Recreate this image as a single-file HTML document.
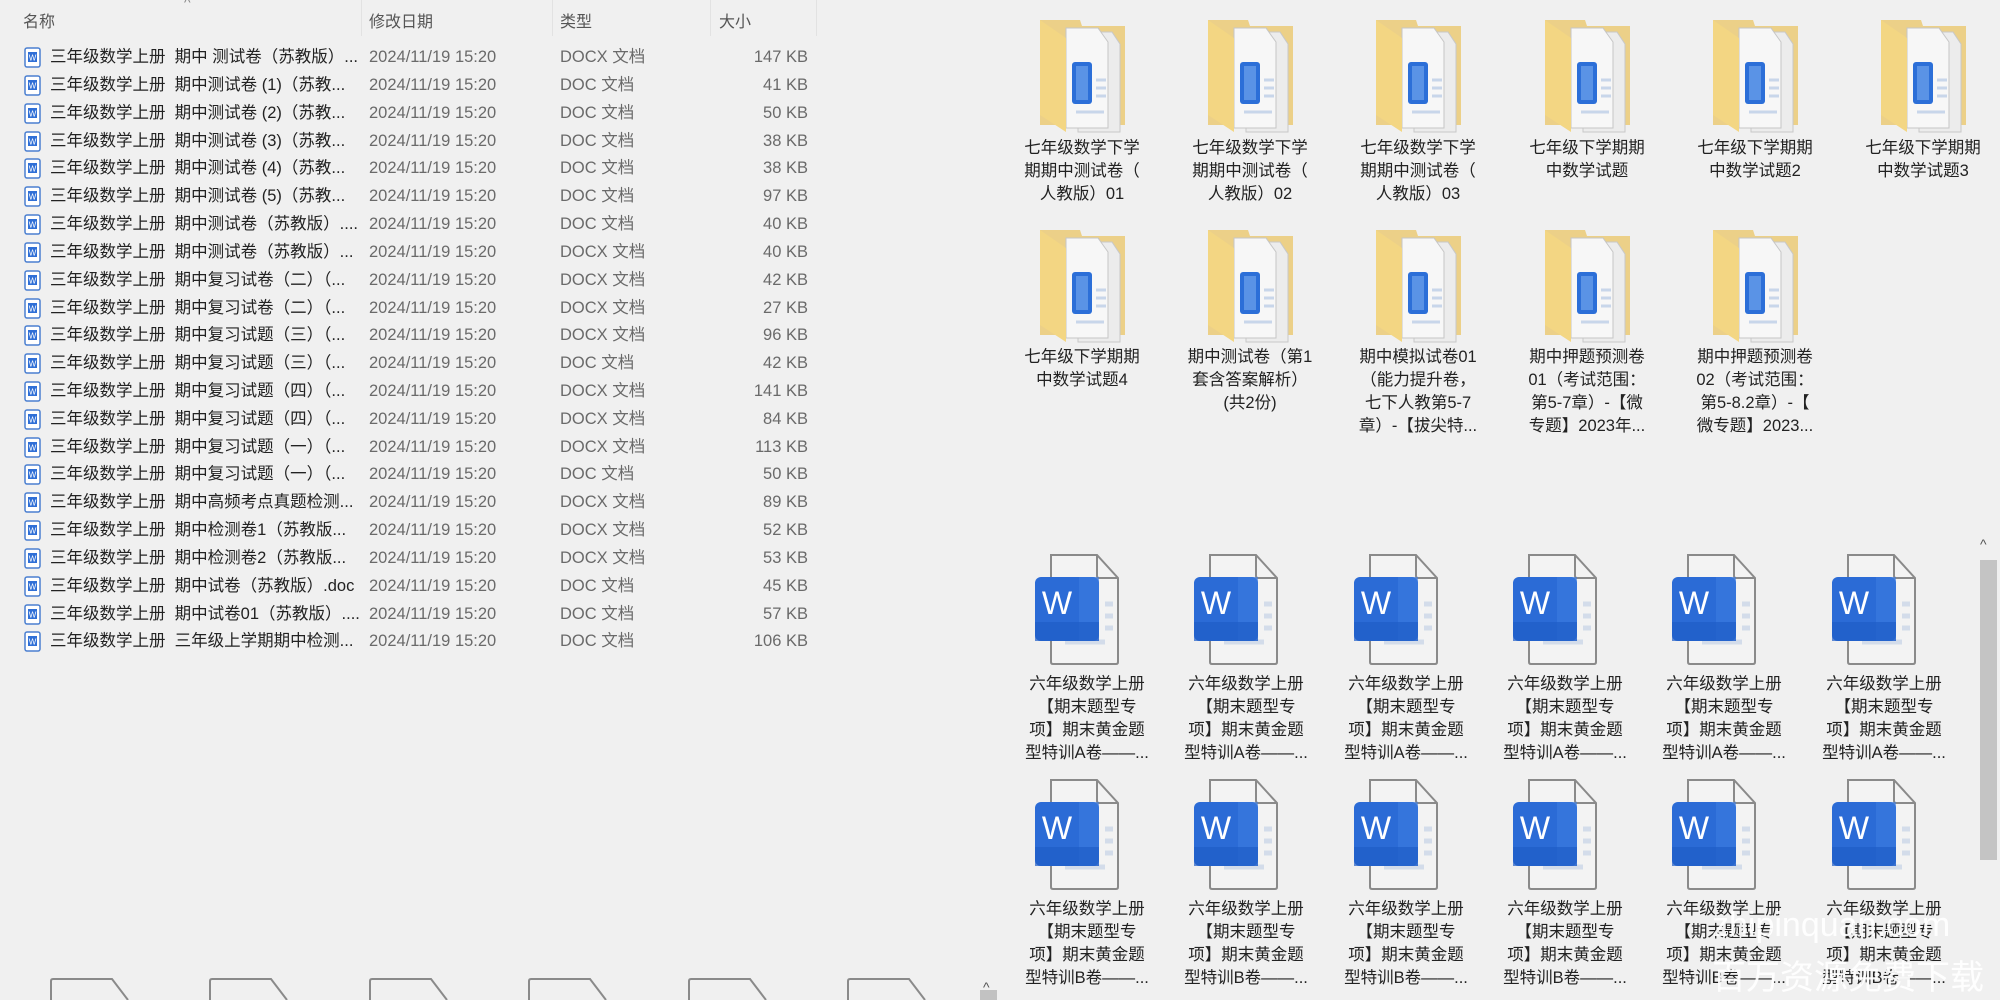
<!DOCTYPE html>
<html><head><meta charset="utf-8"><style>
*{margin:0;padding:0;box-sizing:border-box}
body{width:2000px;height:1000px;background:#f0f0f0;position:relative;overflow:hidden;font-family:"Liberation Sans","Noto Sans CJK SC",sans-serif;}
.a{position:absolute;white-space:nowrap}
.h{top:8px;font-size:16px;color:#555}
.sep{position:absolute;top:0;width:1px;height:36px;background:#e2e2e2}
.r{position:absolute;left:0;width:820px;height:28px;font-size:16.5px;line-height:28px}
.r span{position:absolute}
.n{left:50px;color:#222}
.d{left:369px;color:#6a6a6a}
.t{left:560px;color:#6a6a6a}
.s{right:12px;color:#6a6a6a}
.ic{position:absolute;left:24px;top:4px}
.lab{position:absolute;width:150px;text-align:center;font-size:16.5px;line-height:23px;color:#222}
.wm{position:absolute;color:rgba(255,255,255,0.92);font-size:34px;white-space:nowrap}
</style></head><body>
<svg width="0" height="0" style="position:absolute">
<defs>
<g id="sdoc"><rect x="1" y="1" width="15" height="19" rx="2" fill="#fff" stroke="#4a7fd0" stroke-width="1.5"/><rect x="4" y="5" width="9" height="10" fill="#2f6fd6"/><text x="8.5" y="13.5" font-size="8" fill="#fff" text-anchor="middle" font-family="Liberation Sans">W</text></g>
<g id="fold">
<path d="M0 0 H40 L42 6 H85 V105 H0 Z" fill="#ecd088"/>
<path d="M38 12 H72 L80 24 V112 H38 Z" fill="#ececec" stroke="#c8c8c8"/>
<path d="M26 8 H58 L68 22 V108 H26 Z" fill="#f7f7f7" stroke="#c6c6c6"/>
<rect x="32" y="42" width="20" height="42" rx="3" fill="#2c6fd8"/>
<rect x="36" y="46" width="12" height="34" fill="#5a93e6"/>
<path d="M56 60 h10 M56 68 h10 M56 76 h10 M36 92 h28" stroke="#c8d6ea" stroke-width="3"/>
<path d="M0 0 L26 18 V112 L0 95 Z" fill="#f3d683"/>
</g>
<g id="word">
<path d="M16 1 H62 L83 24 V108 Q83 110 81 110 H18 Q16 110 16 108 Z" fill="#f3f3f3" stroke="#8a8a8a" stroke-width="2"/>
<path d="M62 1 V22 Q62 24 64 24 H83" fill="none" stroke="#8a8a8a" stroke-width="2"/>
<path d="M70 50 h8 M70 62 h8 M70 74 h8 M30 88 h40" stroke="#d3dcea" stroke-width="5"/>
<rect x="0" y="23" width="64" height="64" rx="6" fill="#2b6bd6"/>
<rect x="44" y="23" width="20" height="64" fill="#3c7be0" opacity="0.6"/>
<rect x="0" y="68" width="64" height="19" fill="#1f5cc6" opacity="0.7"/>
<text x="22" y="60" font-size="32" fill="#fff" text-anchor="middle" font-family="Liberation Sans">W</text>
</g>
</defs></svg>

<div class="a" style="left:184px;top:-6px;font-size:14px;color:#888">^</div>
<div class="a h" style="left:23px">名称</div>
<div class="a h" style="left:369px">修改日期</div>
<div class="a h" style="left:560px">类型</div>
<div class="a h" style="left:719px">大小</div>
<div class="sep" style="left:361px"></div><div class="sep" style="left:552px"></div><div class="sep" style="left:710px"></div><div class="sep" style="left:816px"></div>

<div class="r" style="top:43px"><svg class="ic" width="18" height="22"><use href="#sdoc"/></svg><span class="n">三年级数学上册&nbsp; 期中 测试卷（苏教版）...</span><span class="d">2024/11/19 15:20</span><span class="t">DOCX 文档</span><span class="s">147 KB</span></div>
<div class="r" style="top:71px"><svg class="ic" width="18" height="22"><use href="#sdoc"/></svg><span class="n">三年级数学上册&nbsp; 期中测试卷 (1)（苏教...</span><span class="d">2024/11/19 15:20</span><span class="t">DOC 文档</span><span class="s">41 KB</span></div>
<div class="r" style="top:99px"><svg class="ic" width="18" height="22"><use href="#sdoc"/></svg><span class="n">三年级数学上册&nbsp; 期中测试卷 (2)（苏教...</span><span class="d">2024/11/19 15:20</span><span class="t">DOC 文档</span><span class="s">50 KB</span></div>
<div class="r" style="top:127px"><svg class="ic" width="18" height="22"><use href="#sdoc"/></svg><span class="n">三年级数学上册&nbsp; 期中测试卷 (3)（苏教...</span><span class="d">2024/11/19 15:20</span><span class="t">DOC 文档</span><span class="s">38 KB</span></div>
<div class="r" style="top:154px"><svg class="ic" width="18" height="22"><use href="#sdoc"/></svg><span class="n">三年级数学上册&nbsp; 期中测试卷 (4)（苏教...</span><span class="d">2024/11/19 15:20</span><span class="t">DOC 文档</span><span class="s">38 KB</span></div>
<div class="r" style="top:182px"><svg class="ic" width="18" height="22"><use href="#sdoc"/></svg><span class="n">三年级数学上册&nbsp; 期中测试卷 (5)（苏教...</span><span class="d">2024/11/19 15:20</span><span class="t">DOC 文档</span><span class="s">97 KB</span></div>
<div class="r" style="top:210px"><svg class="ic" width="18" height="22"><use href="#sdoc"/></svg><span class="n">三年级数学上册&nbsp; 期中测试卷（苏教版）....</span><span class="d">2024/11/19 15:20</span><span class="t">DOC 文档</span><span class="s">40 KB</span></div>
<div class="r" style="top:238px"><svg class="ic" width="18" height="22"><use href="#sdoc"/></svg><span class="n">三年级数学上册&nbsp; 期中测试卷（苏教版）...</span><span class="d">2024/11/19 15:20</span><span class="t">DOCX 文档</span><span class="s">40 KB</span></div>
<div class="r" style="top:266px"><svg class="ic" width="18" height="22"><use href="#sdoc"/></svg><span class="n">三年级数学上册&nbsp; 期中复习试卷（二）（...</span><span class="d">2024/11/19 15:20</span><span class="t">DOCX 文档</span><span class="s">42 KB</span></div>
<div class="r" style="top:294px"><svg class="ic" width="18" height="22"><use href="#sdoc"/></svg><span class="n">三年级数学上册&nbsp; 期中复习试卷（二）（...</span><span class="d">2024/11/19 15:20</span><span class="t">DOCX 文档</span><span class="s">27 KB</span></div>
<div class="r" style="top:321px"><svg class="ic" width="18" height="22"><use href="#sdoc"/></svg><span class="n">三年级数学上册&nbsp; 期中复习试题（三）（...</span><span class="d">2024/11/19 15:20</span><span class="t">DOCX 文档</span><span class="s">96 KB</span></div>
<div class="r" style="top:349px"><svg class="ic" width="18" height="22"><use href="#sdoc"/></svg><span class="n">三年级数学上册&nbsp; 期中复习试题（三）（...</span><span class="d">2024/11/19 15:20</span><span class="t">DOC 文档</span><span class="s">42 KB</span></div>
<div class="r" style="top:377px"><svg class="ic" width="18" height="22"><use href="#sdoc"/></svg><span class="n">三年级数学上册&nbsp; 期中复习试题（四）（...</span><span class="d">2024/11/19 15:20</span><span class="t">DOCX 文档</span><span class="s">141 KB</span></div>
<div class="r" style="top:405px"><svg class="ic" width="18" height="22"><use href="#sdoc"/></svg><span class="n">三年级数学上册&nbsp; 期中复习试题（四）（...</span><span class="d">2024/11/19 15:20</span><span class="t">DOCX 文档</span><span class="s">84 KB</span></div>
<div class="r" style="top:433px"><svg class="ic" width="18" height="22"><use href="#sdoc"/></svg><span class="n">三年级数学上册&nbsp; 期中复习试题（一）（...</span><span class="d">2024/11/19 15:20</span><span class="t">DOCX 文档</span><span class="s">113 KB</span></div>
<div class="r" style="top:460px"><svg class="ic" width="18" height="22"><use href="#sdoc"/></svg><span class="n">三年级数学上册&nbsp; 期中复习试题（一）（...</span><span class="d">2024/11/19 15:20</span><span class="t">DOC 文档</span><span class="s">50 KB</span></div>
<div class="r" style="top:488px"><svg class="ic" width="18" height="22"><use href="#sdoc"/></svg><span class="n">三年级数学上册&nbsp; 期中高频考点真题检测...</span><span class="d">2024/11/19 15:20</span><span class="t">DOCX 文档</span><span class="s">89 KB</span></div>
<div class="r" style="top:516px"><svg class="ic" width="18" height="22"><use href="#sdoc"/></svg><span class="n">三年级数学上册&nbsp; 期中检测卷1（苏教版...</span><span class="d">2024/11/19 15:20</span><span class="t">DOCX 文档</span><span class="s">52 KB</span></div>
<div class="r" style="top:544px"><svg class="ic" width="18" height="22"><use href="#sdoc"/></svg><span class="n">三年级数学上册&nbsp; 期中检测卷2（苏教版...</span><span class="d">2024/11/19 15:20</span><span class="t">DOCX 文档</span><span class="s">53 KB</span></div>
<div class="r" style="top:572px"><svg class="ic" width="18" height="22"><use href="#sdoc"/></svg><span class="n">三年级数学上册&nbsp; 期中试卷（苏教版）.doc</span><span class="d">2024/11/19 15:20</span><span class="t">DOC 文档</span><span class="s">45 KB</span></div>
<div class="r" style="top:600px"><svg class="ic" width="18" height="22"><use href="#sdoc"/></svg><span class="n">三年级数学上册&nbsp; 期中试卷01（苏教版）....</span><span class="d">2024/11/19 15:20</span><span class="t">DOC 文档</span><span class="s">57 KB</span></div>
<div class="r" style="top:627px"><svg class="ic" width="18" height="22"><use href="#sdoc"/></svg><span class="n">三年级数学上册&nbsp; 三年级上学期期中检测...</span><span class="d">2024/11/19 15:20</span><span class="t">DOC 文档</span><span class="s">106 KB</span></div>

<svg class="a" style="left:0;top:975px" width="1000" height="25">
<g fill="none" stroke="#8a8a8a" stroke-width="2">
<path d="M51 25 V6 Q51 4 53 4 H112 L128 25"/>
<path d="M210 25 V6 Q210 4 212 4 H271 L287 25"/>
<path d="M370 25 V6 Q370 4 372 4 H431 L447 25"/>
<path d="M529 25 V6 Q529 4 531 4 H590 L606 25"/>
<path d="M689 25 V6 Q689 4 691 4 H750 L766 25"/>
<path d="M848 25 V6 Q848 4 850 4 H909 L925 25"/>
</g>
<text x="983" y="17" font-size="14" fill="#555" font-family="Liberation Sans">^</text>
</svg>
<div class="a" style="left:980px;top:990px;width:17px;height:10px;background:#c2c2c2"></div>

<svg class="a" style="left:1040px;top:20px" width="90" height="115"><use href="#fold"/></svg>
<svg class="a" style="left:1208px;top:20px" width="90" height="115"><use href="#fold"/></svg>
<svg class="a" style="left:1376px;top:20px" width="90" height="115"><use href="#fold"/></svg>
<svg class="a" style="left:1545px;top:20px" width="90" height="115"><use href="#fold"/></svg>
<svg class="a" style="left:1713px;top:20px" width="90" height="115"><use href="#fold"/></svg>
<svg class="a" style="left:1881px;top:20px" width="90" height="115"><use href="#fold"/></svg>
<svg class="a" style="left:1040px;top:230px" width="90" height="115"><use href="#fold"/></svg>
<svg class="a" style="left:1208px;top:230px" width="90" height="115"><use href="#fold"/></svg>
<svg class="a" style="left:1376px;top:230px" width="90" height="115"><use href="#fold"/></svg>
<svg class="a" style="left:1545px;top:230px" width="90" height="115"><use href="#fold"/></svg>
<svg class="a" style="left:1713px;top:230px" width="90" height="115"><use href="#fold"/></svg>

<div class="lab" style="left:1007px;top:137px">七年级数学下学<br>期期中测试卷（<br>人教版）01</div>
<div class="lab" style="left:1175px;top:137px">七年级数学下学<br>期期中测试卷（<br>人教版）02</div>
<div class="lab" style="left:1343px;top:137px">七年级数学下学<br>期期中测试卷（<br>人教版）03</div>
<div class="lab" style="left:1512px;top:137px">七年级下学期期<br>中数学试题</div>
<div class="lab" style="left:1680px;top:137px">七年级下学期期<br>中数学试题2</div>
<div class="lab" style="left:1848px;top:137px">七年级下学期期<br>中数学试题3</div>
<div class="lab" style="left:1007px;top:346px">七年级下学期期<br>中数学试题4</div>
<div class="lab" style="left:1175px;top:346px">期中测试卷（第1<br>套含答案解析）<br>(共2份)</div>
<div class="lab" style="left:1343px;top:346px">期中模拟试卷01<br>（能力提升卷，<br>七下人教第5-7<br>章）-【拔尖特...</div>
<div class="lab" style="left:1512px;top:346px">期中押题预测卷<br>01（考试范围：<br>第5-7章）-【微<br>专题】2023年...</div>
<div class="lab" style="left:1680px;top:346px">期中押题预测卷<br>02（考试范围：<br>第5-8.2章）-【<br>微专题】2023...</div>

<div class="a" style="left:1980px;top:536px;font-size:14px;color:#555">^</div>
<div class="a" style="left:1980px;top:560px;width:17px;height:300px;background:#c4c4c4"></div>

<svg class="a" style="left:1035px;top:554px" width="90" height="115"><use href="#word"/></svg>
<svg class="a" style="left:1194px;top:554px" width="90" height="115"><use href="#word"/></svg>
<svg class="a" style="left:1354px;top:554px" width="90" height="115"><use href="#word"/></svg>
<svg class="a" style="left:1513px;top:554px" width="90" height="115"><use href="#word"/></svg>
<svg class="a" style="left:1672px;top:554px" width="90" height="115"><use href="#word"/></svg>
<svg class="a" style="left:1832px;top:554px" width="90" height="115"><use href="#word"/></svg>
<svg class="a" style="left:1035px;top:779px" width="90" height="115"><use href="#word"/></svg>
<svg class="a" style="left:1194px;top:779px" width="90" height="115"><use href="#word"/></svg>
<svg class="a" style="left:1354px;top:779px" width="90" height="115"><use href="#word"/></svg>
<svg class="a" style="left:1513px;top:779px" width="90" height="115"><use href="#word"/></svg>
<svg class="a" style="left:1672px;top:779px" width="90" height="115"><use href="#word"/></svg>
<svg class="a" style="left:1832px;top:779px" width="90" height="115"><use href="#word"/></svg>

<div class="lab" style="left:1012px;top:673px">六年级数学上册<br>【期末题型专<br>项】期末黄金题<br>型特训A卷——...</div>
<div class="lab" style="left:1171px;top:673px">六年级数学上册<br>【期末题型专<br>项】期末黄金题<br>型特训A卷——...</div>
<div class="lab" style="left:1331px;top:673px">六年级数学上册<br>【期末题型专<br>项】期末黄金题<br>型特训A卷——...</div>
<div class="lab" style="left:1490px;top:673px">六年级数学上册<br>【期末题型专<br>项】期末黄金题<br>型特训A卷——...</div>
<div class="lab" style="left:1649px;top:673px">六年级数学上册<br>【期末题型专<br>项】期末黄金题<br>型特训A卷——...</div>
<div class="lab" style="left:1809px;top:673px">六年级数学上册<br>【期末题型专<br>项】期末黄金题<br>型特训A卷——...</div>
<div class="lab" style="left:1012px;top:898px">六年级数学上册<br>【期末题型专<br>项】期末黄金题<br>型特训B卷——...</div>
<div class="lab" style="left:1171px;top:898px">六年级数学上册<br>【期末题型专<br>项】期末黄金题<br>型特训B卷——...</div>
<div class="lab" style="left:1331px;top:898px">六年级数学上册<br>【期末题型专<br>项】期末黄金题<br>型特训B卷——...</div>
<div class="lab" style="left:1490px;top:898px">六年级数学上册<br>【期末题型专<br>项】期末黄金题<br>型特训B卷——...</div>
<div class="lab" style="left:1649px;top:898px">六年级数学上册<br>【期末题型专<br>项】期末黄金题<br>型特训B卷——...</div>
<div class="lab" style="left:1809px;top:898px">六年级数学上册<br>【期末题型专<br>项】期末黄金题<br>型特训B卷——...</div>

<div class="wm" style="left:1712px;top:906px">zhipinquan.com</div>
<div class="wm" style="left:1712px;top:950px">百万资源免费下载</div>
</body></html>
